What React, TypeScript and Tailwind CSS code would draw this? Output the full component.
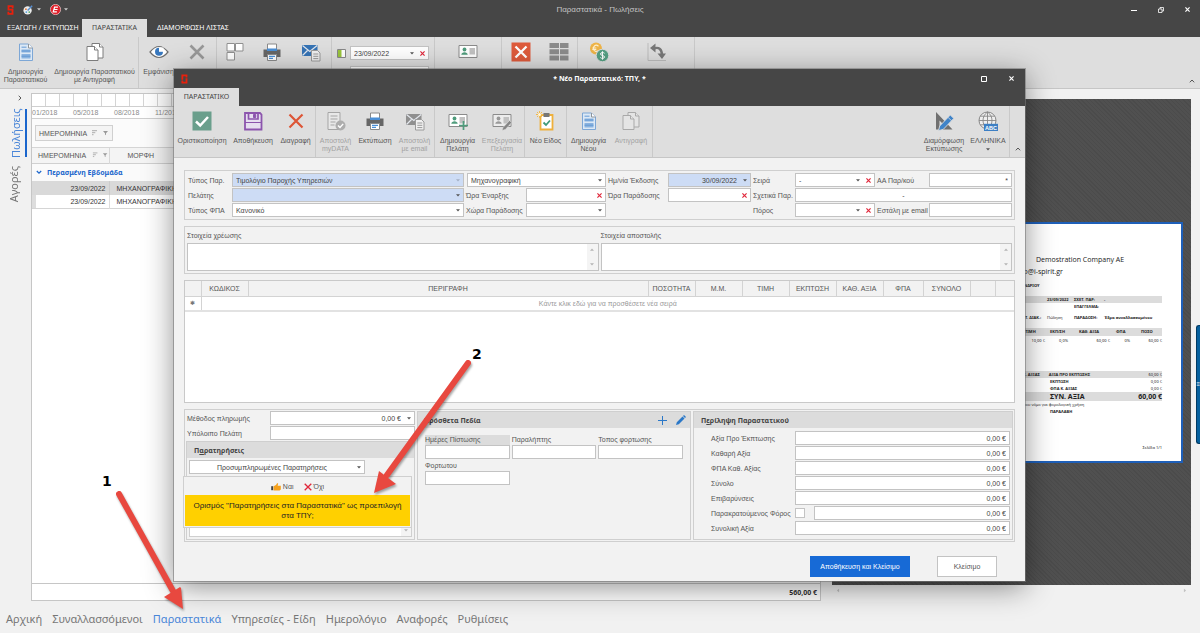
import React from "react";

type Kids = { children?: React.ReactNode };

/* ---------- icons ---------- */

function Logo({ flip = false }: { flip?: boolean }) {
  return (
    <svg viewBox="0 0 8 12" className="h-[10px] w-[7px]" aria-hidden="true">
      <path
        d={flip ? "M1.400 7V1.600H6.400V4.200M6.400 5V10.400H1.400V7.800" : "M6.600 3.800V1.400H1.600V5.600H6.400V10.600H1.400V8.200"}
        fill="none"
        stroke="#e8200c"
        strokeWidth="2.200"
      />
    </svg>
  );
}

function Svg({ children, className = "size-[20px]" }: Kids & { className?: string }) {
  return (
    <svg viewBox="0 0 20 20" className={className} fill="none" aria-hidden="true">
      {children}
    </svg>
  );
}

const DocBlue = () => (
  <Svg>
    <path d="M3.500 2h9l4 4v12.500h-13z" fill="#dce8f5" stroke="#7da7d6" />
    <path d="M12.500 2v4h4" fill="#fff" stroke="#8f9499" />
    <path d="M5.500 4.500h5v1.500h-5zM5.500 7.500h9v3h-9zM5.500 12h9v4.500h-9z" fill="#8ab3e0" />
    <path d="M5.500 9h9M5.500 14.200h9" stroke="#5b93cf" strokeWidth=".8" />
  </Svg>
);

const Copies = ({ faded = false }: { faded?: boolean }) => (
  <Svg>
    <g stroke={faded ? "#a9a9a9" : "#7c7c7c"} fill={faded ? "#e4e4e4" : "#fff"}>
      <path d="M7 1.500h7.500l3.500 3.500v11H7z" />
      <path d="M14.500 1.500V5H18" />
      <path d="M2 4.500h7.500L13 8v10.500H2z" />
      <path d="M9.500 4.500V8H13" />
    </g>
  </Svg>
);

const Eye = () => (
  <Svg>
    <path d="M1 10q9-11 18 0q-9 11-18 0z" fill="#fff" stroke="#6f6f6f" strokeWidth="1.200" />
    <circle cx="10" cy="9.800" r="4" fill="#3878be" />
    <path d="M10 9.800V5.500h4.500v4.300z" fill="#fff" />
  </Svg>
);

const Cross = ({ color, w = 2.2 }: { color: string; w?: number }) => (
  <Svg>
    <path d="M3.500 3.500l13 13M16.500 3.500l-13 13" stroke={color} strokeWidth={w} />
  </Svg>
);

const Squares = () => (
  <Svg>
    <path d="M2 1.500h7.500v7.500H2zM10.500 1.500h7.500v7.500h-7.500zM2 10.500h7.500V18H2z" fill="#fff" stroke="#909090" />
  </Svg>
);

const Printer = () => (
  <Svg>
    <path d="M5.500 2h9v6h-9z" fill="#fff" stroke="#8a8a8a" />
    <path d="M1.500 7.500h17v7.500h-17z" fill="#666" />
    <path d="M5 6.500h10v2.500H5z" fill="#4b8fd5" />
    <path d="M5.500 12.500h9v6h-9z" fill="#fff" stroke="#8a8a8a" />
    <path d="M7 14.300h6M7 16.300h4" stroke="#4b8fd5" strokeWidth="1.200" />
  </Svg>
);

const Mail = ({ faded = false }: { faded?: boolean }) => (
  <Svg>
    <path d="M1 3h15.500v11H1z" fill={faded ? "#8f8f8f" : "#3573b5"} />
    <path d="M1.500 3.500l7.300 6 7.300-6M1.500 13.500l5-5M16 13l-5-5" stroke="#e4e8ee" strokeWidth="1.200" />
    <path d="M10.500 8.500h6L19 11v8h-8.500z" fill="#f0f0f0" stroke="#9a9a9a" />
    <path d="M12.300 12h5M12.300 14.300h5M12.300 16.600h5" stroke="#999" />
  </Svg>
);

const Card = ({ mark, faded = false }: { mark?: "plus" | "pen"; faded?: boolean }) => (
  <Svg>
    <path d="M1 3.500h18v12H1z" fill={faded ? "#ececec" : "#fff"} stroke="#8b8b8b" />
    <circle cx="6.500" cy="7.500" r="1.900" fill={faded ? "#999" : "#4f9c7c"} />
    <path d="M3.300 12.800c0-3.500 6.400-3.500 6.400 0z" fill={faded ? "#999" : "#4f9c7c"} />
    <path d="M11.500 6h5.500v6.500h-5.500z" fill="#c1c1c1" />
    {mark === "plus" && <path d="M15.500 10v9M11 14.500h9" stroke="#4f9c7c" strokeWidth="1.700" />}
    {mark === "pen" && <path d="M10 19.500l1-3 6.500-7 2.300 2-6.500 7z" fill="#858585" stroke="#e4e4e4" strokeWidth=".6" />}
  </Svg>
);

const RedBox = () => (
  <Svg>
    <path d="M.5.5h19v19H.5z" fill="#de5b3c" />
    <path d="M4.500 4.500l11 11M15.500 4.500l-11 11" stroke="#fff" strokeWidth="2.300" />
  </Svg>
);

const Tiles = () => (
  <Svg>
    <path d="M.5 1H10v5H.5zM11 1h8.500v5H11zM.5 7.300H10v5H.5zM11 7.300h8.500v5H11zM.5 13.600H10v5H.5zM11 13.600h8.500v5H11z" fill="#8b8b8b" />
  </Svg>
);

const Coins = () => (
  <Svg>
    <circle cx="7" cy="6.500" r="6" fill="#efb447" />
    <path d="M9.500 4.300c-3-2.500-5.500 0-5 2.700s3.300 3 5 1.300M3.300 6h4M3.300 7.500h4" stroke="#fff1d0" strokeWidth="1.200" />
    <circle cx="13.500" cy="13.500" r="6.300" fill="#56a083" stroke="#dedede" />
    <path d="M15.500 11.300c-1-1.200-4-1-4 .7 0 2 4 1 4 3 0 1.600-3 2-4.200.5M13.500 9.300v8.400" stroke="#fff" />
  </Svg>
);

const Return = () => (
  <Svg>
    <path d="M1 1v17.500h18" stroke="#bcbcbc" />
    <path d="M7 6.500c5-2 8 1 8 7" stroke="#787878" strokeWidth="2.400" />
    <path d="M3 6l5.500-4.500v9zM10.500 11.500h8.500l-4 5.500z" fill="#787878" />
  </Svg>
);

const CheckBox = () => (
  <Svg>
    <path d="M.5.500h19v19H.5z" fill="#6a9f8c" />
    <path d="M4 10.500l4.200 4L16 6" stroke="#fff" strokeWidth="2.500" />
  </Svg>
);

const Floppy = () => (
  <Svg>
    <path d="M2 2h15l1.500 1.500v15H2z" fill="#e6dff0" stroke="#8c55ad" strokeWidth="1.800" />
    <path d="M5.500 2v6h9.500V2" stroke="#8c55ad" strokeWidth="1.700" />
    <path d="M10.500 3.500h2.200v3h-2.200zM2 11.500h16" fill="#8c55ad" stroke="#8c55ad" />
  </Svg>
);

const DocCheck = () => (
  <Svg>
    <path d="M2 1.500h12v17H2z" fill="#e8e8e8" stroke="#a5a5a5" />
    <path d="M4.500 5h7M4.500 8h7M4.500 11h5M4.500 14h4" stroke="#a5a5a5" />
    <circle cx="14.500" cy="14.500" r="5" fill="#adadad" />
    <path d="M12 14.500l2 2 3.200-3.600" stroke="#fff" strokeWidth="1.400" />
  </Svg>
);

const Clipboard = () => (
  <Svg>
    <path d="M4.500 4h12v14.500h-12z" fill="#fff" stroke="#eeb03c" strokeWidth="1.800" />
    <path d="M7.500 2h6v4h-6z" fill="#777" />
    <path d="M7.500 11.500l2.500 2.500 4-4.500" stroke="#3f9a78" strokeWidth="1.800" />
    <path d="M3.500 0v7M0 3.500h7M1 1l5 5M6 1L1 6" stroke="#f2b94e" />
    <circle cx="3.500" cy="3.500" r="1.500" fill="#fff6dd" />
  </Svg>
);

const Design = () => (
  <Svg>
    <path d="M2 1v17.500h16.500zM5.500 9.500v5.500h5.500z" fill="#707070" fillRule="evenodd" />
    <path d="M4.500 19.700l1.200-4.700L16.300 4l3.500 3.400L9.300 18.300z" fill="#3f83c8" stroke="#dedede" strokeWidth=".9" />
    <path d="M14 6.300l3.500 3.500" stroke="#dedede" strokeWidth=".8" />
  </Svg>
);

const Globe = () => (
  <Svg>
    <circle cx="9.500" cy="9.500" r="8.500" fill="#efefef" stroke="#878787" />
    <path d="M9.500 1v17M1 9.500h17M2.500 5.200h14M2.500 13.800h14M9.500 1C3.500 5 3.500 14 9.500 18M9.500 1c6 4 6 13 0 17" stroke="#878787" strokeWidth=".9" />
    <path d="M6 12.800h14V20H6z" fill="#3d7fc4" />
    <text x="13" y="18.600" fontSize="5.500" fontWeight="700" fill="#fff" textAnchor="middle">ABC</text>
  </Svg>
);

const Caret = ({ color = "#555" }: { color?: string }) => (
  <svg viewBox="0 0 5 3" className="h-[3px] w-[4px] shrink-0" aria-hidden="true">
    <path d="M0 0h5L2.500 2.800z" fill={color} />
  </svg>
);

const Chevron = ({ className = "" }: { className?: string }) => (
  <svg viewBox="0 0 6 6" className={`size-[6px] ${className}`} aria-hidden="true">
    <path d="M.8 4.300L3 2l2.200 2.300" fill="none" stroke="#555" />
  </svg>
);

const SmallX = ({ color = "#e0263a" }: { color?: string }) => (
  <svg viewBox="0 0 6 6" className="size-[5px] shrink-0" aria-hidden="true">
    <path d="M.5.5l5 5M5.500.5l-5 5" stroke={color} strokeWidth="1.400" />
  </svg>
);

const SortFilter = () => (
  <svg viewBox="0 0 18 6" className="h-[6px] w-[18px]" aria-hidden="true">
    <path d="M1 .7h5M1 2.700h3.300M1 4.700h1.500" stroke="#999" strokeWidth=".8" />
    <path d="M12 1h5l-2 2.200v2l-1-.6V3.200z" fill="#999" />
  </svg>
);

/* ---------- building blocks ---------- */

function Tool({ icon, lines = [], width, faded = false, caret = false, label }: {
  icon: React.ReactNode; lines?: string[]; width: string; faded?: boolean; caret?: boolean; label?: string;
}) {
  return (
    <button type="button" aria-label={label} className={`flex shrink-0 flex-col items-center pt-[5px] ${width} ${faded ? "text-[#a2a2a2]" : "text-[#555]"}`}>
      {icon}
      <span className="mt-[6px] flex flex-col items-center leading-[8px] whitespace-nowrap">
        {lines.map((l) => <span key={l}>{l}</span>)}
        {caret && <span className="pt-[3px]"><Caret /></span>}
      </span>
    </button>
  );
}

const Sep = () => <div className="w-px shrink-0 self-stretch bg-[#c9c9c9]" />;

function Box({ children, blue = false, className = "" }: Kids & { blue?: boolean; className?: string }) {
  return (
    <div className={`flex h-[14px] min-w-0 items-center gap-[6px] border border-[#c3c3c3] px-[3px] ${blue ? "bg-[#cddcf5]" : "bg-white"} ${className}`}>
      {children}
    </div>
  );
}

function Input({ id, value = "", align = "text-left", label }: { id?: string; value?: string; align?: string; label?: string }) {
  return (
    <input id={id} aria-label={label} defaultValue={value} className={`h-[12px] w-full min-w-0 flex-1 bg-transparent text-[#444] outline-none ${align}`} />
  );
}

function Select({ id, value = "", blue = false, clear = false, pale = false, className = "", align = "", label }: {
  id?: string; value?: string; blue?: boolean; clear?: boolean; pale?: boolean; className?: string; align?: string; label?: string;
}) {
  return (
    <Box blue={blue} className={className}>
      <select id={id} aria-label={label} className={`h-[12px] w-full min-w-0 flex-1 appearance-none bg-transparent text-[#444] outline-none ${align}`}>
        <option>{value}</option>
      </select>
      <Caret color={pale ? "#a5b0c4" : "#555"} />
      {clear && <button type="button" aria-label="Καθαρισμός"><SmallX /></button>}
    </Box>
  );
}

function L({ f, children, className = "pl-[2px]" }: Kids & { f: string; className?: string }) {
  return <label htmlFor={f} className={`self-center whitespace-nowrap ${className}`}>{children}</label>;
}

function ScrollMarks() {
  return (
    <div className="flex w-[11px] flex-col items-center justify-between bg-[#f4f4f4] py-[4px]">
      <span className="rotate-180"><Caret color="#b5b5b5" /></span>
      <Caret color="#b5b5b5" />
    </div>
  );
}

/* ---------- main window ---------- */

function TitleBar() {
  return (
    <header className="bg-[#464646] text-white">
      <div className="grid h-[19px] grid-cols-[1fr_auto_1fr] items-center">
        <div className="flex items-center gap-[9px] pl-[7px]">
          <Logo />
          <button type="button" aria-label="Θέμα" className="flex items-center gap-[4px]">
            <svg viewBox="0 0 12 12" className="size-[10px]" aria-hidden="true">
              <circle cx="5.500" cy="6.500" r="5" fill="#ececec" />
              <circle cx="3.500" cy="5" r="1.100" fill="#e27a3a" /><circle cx="4" cy="8.500" r="1.100" fill="#4b9bd8" /><circle cx="7.500" cy="8.500" r="1.100" fill="#57aa67" />
              <path d="M5.500 6.500L11 1" stroke="#5a8fd0" strokeWidth="1.800" />
            </svg>
            <Caret color="#ccc" />
          </button>
          <button type="button" aria-label="Εφαρμογή" className="flex items-center gap-[3px]">
            <svg viewBox="0 0 12 12" className="size-[11px]" aria-hidden="true">
              <circle cx="6" cy="6" r="5.600" fill="#e0202a" stroke="#fff" strokeWidth=".6" />
              <path d="M8.700 3.500H5L3.500 8.500h4M4.500 6h3.700" fill="none" stroke="#fff" strokeWidth="1.300" />
            </svg>
            <Caret color="#ccc" />
          </button>
        </div>
        <h1 className="text-[8px] text-[#c4c4c4]">Παραστατικά - Πωλήσεις</h1>
        <div className="flex items-center justify-end gap-[21px] pr-[10px]">
          <button type="button" aria-label="Ελαχιστοποίηση"><svg viewBox="0 0 6 6" className="size-[6px]"><path d="M0 3.500h6" stroke="#fff" /></svg></button>
          <button type="button" aria-label="Επαναφορά"><svg viewBox="0 0 6 6" className="size-[6px]"><path d="M.5 2h3.500v3.500H.5zM2 2V.5h3.500V4H4" fill="none" stroke="#fff" strokeWidth=".8" /></svg></button>
          <button type="button" aria-label="Κλείσιμο"><SmallX color="#fff" /></button>
        </div>
      </div>
      <nav className="flex h-[18px] font-['Noto_Sans'] leading-[18px]">
        <a href="#export" className="w-[82px] pl-[7px] whitespace-nowrap">ΕΞΑΓΩΓΗ / ΕΚΤΥΠΩΣΗ</a>
        <a href="#docs" className="w-[65px] bg-[#dedede] text-center text-[#444]">ΠΑΡΑΣΤΑΤΙΚΑ</a>
        <a href="#list" className="pl-[10px]">ΔΙΑΜΟΡΦΩΣΗ ΛΙΣΤΑΣ</a>
      </nav>
    </header>
  );
}

function MainRibbon() {
  return (
    <div className="flex h-[52px] border-b border-[#c6c6c6] bg-[#dedede]">
      <Tool icon={<DocBlue />} lines={["Δημιουργία", "Παραστατικού"]} width="w-[51px]" />
      <Tool icon={<Copies />} lines={["Δημιουργία Παραστατικού", "με Αντιγραφή"]} width="w-[87px]" />
      <Sep />
      <Tool icon={<Eye />} lines={["Εμφάνιση"]} width="w-[39px]" />
      <Tool icon={<Cross color="#989898" w={2.6} />} width="w-[38px]" label="Διαγραφή" />
      <Sep />
      <Tool icon={<Squares />} width="w-[36px]" label="Ομάδες" />
      <Tool icon={<Printer />} width="w-[37px]" label="Εκτύπωση" />
      <Tool icon={<Mail />} width="w-[41px]" label="Αποστολή" />
      <Sep />
      <div className="flex w-[102px] items-start gap-[4px] px-[5px] pt-[9px]">
        <svg viewBox="0 0 9 9" className="mt-[3px] size-[9px] shrink-0" aria-hidden="true"><path d="M.5.500h8v8h-8z" fill="#fff" stroke="#888" /><path d="M1 1h3.500v7H1z" fill="#9ac53c" /></svg>
        <div className="flex min-w-0 flex-1 flex-col gap-[6px]">
          <Select value="23/09/2022" clear label="Από" />
          <Select value="23/09/2022" clear label="Έως" />
        </div>
      </div>
      <Sep />
      <Tool icon={<Card />} width="w-[66px]" label="Πελάτης" />
      <Sep />
      <Tool icon={<RedBox />} width="w-[38px]" label="Ακύρωση" />
      <Tool icon={<Tiles />} width="w-[37px]" label="Προβολή" />
      <Sep />
      <Tool icon={<Coins />} width="w-[42px]" label="Νομίσματα" />
      <Tool icon={<Return />} width="w-[74px]" label="Επιστροφή" />
      <Sep />
      <div className="flex flex-1 items-end justify-end pr-[5px] pb-[4px]"><Chevron /></div>
    </div>
  );
}

function ListPanel() {
  return (
    <section className="flex w-[790px] flex-col border border-[#c6c6c6] bg-white">
      <div className="h-[13px] border-b border-[#cfcfcf] bg-[repeating-linear-gradient(90deg,#fff_0px,#fff_13px,#d4d4d4_13px,#d4d4d4_14px)]" />
      <div className="flex h-[12px] items-center border-b border-[#cfcfcf] text-[#8b8b8b]">
        {["01/2018", "05/2018", "08/2018", "11/2018"].map((d) => <span key={d} className="w-[41px]">{d}</span>)}
      </div>
      <div className="flex h-[29px] items-center border-b border-[#d5d5d5] bg-[#fbfbfb] pl-[3px]">
        <span className="flex h-[16px] items-center gap-[4px] border border-[#d0d0d0] bg-[#f4f4f4] px-[3px]">ΗΜΕΡΟΜΗΝΙΑ <SortFilter /></span>
      </div>
      <table className="w-full table-fixed border-collapse">
        <thead>
          <tr className="h-[15px] border-b border-[#d0d0d0] bg-[#f4f4f4] text-left">
            <th className="w-[77px] border-r border-[#d8d8d8] pl-[6px] font-normal whitespace-nowrap"><span className="flex items-center gap-[6px]">ΗΜΕΡΟΜΗΝΙΑ <SortFilter /></span></th>
            <th className="w-[70px] pl-[18px] font-normal">ΜΟΡΦΗ</th>
            <th />
          </tr>
        </thead>
        <tbody>
          <tr className="h-[18px] bg-[#fafafa]">
            <td colSpan={3} className="font-['Noto_Sans'] font-bold text-[#1b66cc]"><span className="flex items-center gap-[5px] pl-[4px]"><svg viewBox="0 0 6 6" className="size-[6px]"><path d="M.8 2L3 4.200 5.200 2" fill="none" stroke="#1b66cc" strokeWidth="1.200" /></svg>Περασμένη Εβδομάδα</span></td>
          </tr>
          <tr className="h-[14px] bg-[#d9d9d9] text-[#333]">
            <td className="border-r border-[#ccc] pr-[3px] text-right">23/09/2022</td><td className="pl-[7px] whitespace-nowrap">ΜΗΧΑΝΟΓΡΑΦΙΚΗ</td><td />
          </tr>
          <tr className="h-[13px] border-b border-[#d5d5d5] text-[#333]">
            <td className="border-r border-[#ddd] pr-[3px] text-right shadow-[inset_4px_0_0_#ddd]">23/09/2022</td><td className="pl-[7px] whitespace-nowrap">ΜΗΧΑΝΟΓΡΑΦΙΚΗ</td><td />
          </tr>
        </tbody>
      </table>
      <div className="flex-1" />
      <div className="flex h-[17px] items-center justify-end border-t border-[#c6c6c6] pr-[3px] font-['Noto_Sans'] text-[7px] font-bold text-[#333]">560,00 €</div>
    </section>
  );
}

function Invoice() {
  return (
    <div className="ml-auto flex h-[241px] w-[340px] flex-col border-2 border-[#1e5fb8] bg-white pt-[30px] pr-[19px] pl-[158px] font-['Noto_Sans'] text-[4px] leading-[7px] font-bold text-[#222]">
      <p className="pl-[33px] font-['Open_Sans'] text-[7px] leading-[12px] font-normal">Demostration Company AE</p>
      <p className="pl-[12px] font-['Open_Sans'] text-[7px] leading-[12px] font-normal">info@i-spirit.gr</p>
      <p className="pt-[3px] pl-[8px] leading-[10px]">ΑΛΕΞΑΝΔΡΙΟΥ</p>
      <div className="mt-[5px] grid grid-cols-[44px_27px_30px_1fr] bg-[#dcdcdc]"><span /><span>23/09/2022</span><span>ΣΧΕΤ. ΠΑΡ:</span><span>-</span></div>
      <p className="pl-[71px]">ΕΠΑΓΓΕΛΜΑ:</p>
      <div className="mt-[4px] grid grid-cols-[22px_22px_27px_30px_1fr]"><span /><span>Τ. ΔΙΑΚ.:</span><span className="font-normal">Πώληση</span><span>ΠΑΡΑΔΟΣΗ:</span><span className="whitespace-nowrap">Έδρα συναλλασσομένου</span></div>
      <div className="mt-[7px] grid grid-cols-[22px_25px_29px_37px_25px_1fr] bg-[#dcdcdc] leading-[8px]"><span /><span>ΤΙΜΗ</span><span>ΕΚΠ/ΣΗ</span><span>ΚΑΘ. ΑΞΙΑ</span><span>ΦΠΑ</span><span>ΠΟΣΟ</span></div>
      <div className="mt-px grid grid-cols-[42px_23px_42px_20px_1fr] text-right font-normal"><span>10,00 €</span><span>0,0%</span><span>60,00 €</span><span>0%</span><span>60,00 €</span></div>
      <div className="mt-[27px] flex justify-between bg-[#dcdcdc] pl-[20px]"><span>Κ. ΑΞΙΑΣ</span><span className="mr-auto pl-[9px]">ΑΞΙΑ ΠΡΟ ΕΚΠΤΩΣΗΣ</span><span className="font-normal">60,00 €</span></div>
      <div className="flex justify-between pl-[47px]"><span>ΕΚΠΤΩΣΗ</span><span className="font-normal">0,00 €</span></div>
      <div className="flex justify-between pl-[47px]"><span>ΦΠΑ Κ. ΑΞΙΑΣ</span><span className="font-normal">0,00 €</span></div>
      <div className="flex justify-between bg-[#dcdcdc] pl-[47px] text-[7px] leading-[9px]"><span>ΣΥΝ. ΑΞΙΑ</span><span>60,00 €</span></div>
      <p className="pl-[20px] font-normal">που νόμο για φορολογική χρήση</p>
      <p className="pl-[47px]">ΠΑΡΑΛΑΒΗ</p>
      <p className="mt-auto pb-[10px] text-right font-normal">Σελίδα 1/1</p>
    </div>
  );
}

/* ---------- dialog ---------- */

function DialogRibbon() {
  return (
    <div className="flex h-[52px] border-b border-[#c6c6c6] bg-[#dedede]">
      <Tool icon={<CheckBox />} lines={["Οριστικοποίηση"]} width="w-[56px]" />
      <Tool icon={<Floppy />} lines={["Αποθήκευση"]} width="w-[46px]" />
      <Tool icon={<Cross color="#dd5536" />} lines={["Διαγραφή"]} width="w-[39px]" />
      <Sep />
      <Tool icon={<DocCheck />} lines={["Αποστολή", "myDATA"]} width="w-[39px]" faded />
      <Tool icon={<Printer />} lines={["Εκτύπωση"]} width="w-[40px]" />
      <Tool icon={<Mail faded />} lines={["Αποστολή", "με email"]} width="w-[39px]" faded />
      <Sep />
      <Tool icon={<Card mark="plus" />} lines={["Δημιουργία", "Πελάτη"]} width="w-[45px]" />
      <Tool icon={<Card mark="pen" faded />} lines={["Επεξεργασία", "Πελάτη"]} width="w-[44px]" faded />
      <Sep />
      <Tool icon={<Clipboard />} lines={["Νέο Είδος"]} width="w-[41px]" />
      <Sep />
      <Tool icon={<DocBlue />} lines={["Δημιουργία", "Νέου"]} width="w-[43px]" />
      <Tool icon={<Copies faded />} lines={["Αντιγραφή"]} width="w-[42px]" faded />
      <Sep />
      <div className="flex-1" />
      <Tool icon={<Design />} lines={["Διαμόρφωση", "Εκτύπωσης"]} width="w-[46px]" />
      <Tool icon={<Globe />} lines={["ΕΛΛΗΝΙΚΑ"]} caret width="w-[42px]" />
      <Sep />
      <div className="flex w-[15px] items-end justify-center pb-[5px]"><Chevron /></div>
    </div>
  );
}

function DocumentFields() {
  return (
    <fieldset className="grid grid-cols-[45px_minmax(0,1fr)_62px_80px_62px_83px_44px_80px_54px_83px] gap-y-px border border-[#cfcfcf] px-[2px] py-[2px]">
      <L f="type" className="pl-px">Τύπος Παρ.</L>
      <Select id="type" value="Τιμολόγιο Παροχής Υπηρεσιών" blue pale />
      <Select value="Μηχανογραφική" label="Μορφή" className="col-span-2 ml-[3px]" />
      <L f="issued">Ημ/νία Έκδοσης</L>
      <Select id="issued" value="30/09/2022" blue align="[text-align-last:right]" />
      <L f="series">Σειρά</L>
      <Select id="series" value="-" clear />
      <L f="number">ΑΑ Παρ/κού</L>
      <Box><Input id="number" value="*" align="text-right" /></Box>

      <L f="client" className="pl-px">Πελάτης</L>
      <Select id="client" blue />
      <L f="start">Ώρα Έναρξης</L>
      <Box><Input id="start" /><button type="button" aria-label="Καθαρισμός"><SmallX /></button></Box>
      <L f="delivery">Ώρα Παράδοσης</L>
      <Box><Input id="delivery" /><button type="button" aria-label="Καθαρισμός"><SmallX /></button></Box>
      <L f="related">Σχετικά Παρ.</L>
      <Box className="col-span-3"><Input id="related" value="-" align="text-center" /></Box>

      <L f="vat" className="pl-px">Τύπος ΦΠΑ</L>
      <Select id="vat" value="Κανονικό" />
      <L f="place">Χώρα Παράδοσης</L>
      <Select id="place" />
      <span /><span />
      <L f="resource">Πόρος</L>
      <Select id="resource" clear />
      <L f="mail">Εστάλη με email</L>
      <Box><Input id="mail" /></Box>
    </fieldset>
  );
}

const columns: [string, string][] = [
  ["", "w-[16px]"], ["ΚΩΔΙΚΟΣ", "w-[47px]"], ["ΠΕΡΙΓΡΑΦΗ", ""], ["ΠΟΣΟΤΗΤΑ", "w-[47px]"], ["Μ.Μ.", "w-[47px]"],
  ["ΤΙΜΗ", "w-[47px]"], ["ΕΚΠΤΩΣΗ", "w-[47px]"], ["ΚΑΘ. ΑΞΙΑ", "w-[47px]"], ["ΦΠΑ", "w-[40px]"], ["ΣΥΝΟΛΟ", "w-[47px]"],
  ["", "w-[25px]"], ["", "w-[19px]"],
];

function Lines() {
  return (
    <div className="mt-[6px] h-[123px] border border-[#c9c9c9] bg-white">
      <table className="w-full table-fixed border-collapse">
        <thead>
          <tr className="h-[15px] border-b border-[#d3d3d3] bg-[#f2f2f2]">
            {columns.map(([name, width], i) => (
              <th key={i} className={`border-r border-[#d3d3d3] p-0 font-normal last:border-r-0 ${width}`}>{name}</th>
            ))}
          </tr>
        </thead>
        <tbody>
          <tr className="h-[15px] border-b-2 border-[#e2e2e2] text-[#999]">
            <td className="border-r border-[#d3d3d3] p-0 text-center text-[6px] text-[#777]">✱</td>
            <td colSpan={11} className="p-0 text-center">Κάντε κλικ εδώ για να προσθέσετε νέα σειρά</td>
          </tr>
        </tbody>
      </table>
    </div>
  );
}

const PanelTitle = ({ children }: Kids) => (
  <h3 className="flex h-[16px] items-center bg-[#dcdcdc] px-[7px] font-['Noto_Sans'] font-bold text-[#444]">{children}</h3>
);

function PaymentPanel() {
  return (
    <div className="relative flex w-[229px] flex-col">
      <div className="grid grid-cols-[84px_1fr] gap-y-px">
        <L f="method" className="pl-px">Μέθοδος πληρωμής</L>
        <Select id="method" value="0,00 €" align="[text-align-last:right]" />
        <L f="balance" className="pl-px">Υπόλοιπο Πελάτη</L>
        <Box><Input id="balance" /></Box>
      </div>
      <div className="mt-px flex flex-1 flex-col border border-[#cfcfcf]">
        <PanelTitle><span>Π<u>α</u>ρατηρήσεις</span></PanelTitle>
        <Select value="Προσυμπληρωμένες Παρατηρήσεις" label="Προσυμπληρωμένες" align="[text-align-last:center]" className="mt-[2px] ml-[2px] w-[176px]" />
        <div className="mx-[2px] mt-[2px] mb-[2px] flex flex-1 border border-[#cfcfcf] bg-white">
          <textarea aria-label="Παρατηρήσεις" className="w-full resize-none outline-none" />
          <ScrollMarks />
        </div>
      </div>
      <div role="alertdialog" aria-label="Προεπιλογή" className="absolute top-[65px] -left-[3px] w-[229px] border border-[#cfcfcf] bg-[#f2f2f2] p-px">
        <div className="flex h-[17px] items-center justify-center gap-[10px]">
          <button type="button" className="flex items-center gap-[2px]">
            <svg viewBox="0 0 12 10" className="h-[8px] w-[10px]" aria-hidden="true"><path d="M0 4h2.500v5H0z" fill="#444" /><path d="M3 4l3-1.500L7.500 0l1.300.8-.8 2.700h4V8l-1.500 1.500H3z" fill="#f5a11c" /></svg>
            Ναι
          </button>
          <button type="button" className="flex items-center gap-[2px]">
            <svg viewBox="0 0 8 8" className="size-[8px]" aria-hidden="true"><path d="M.7.7l6.600 6.600M7.300.7L.7 7.300" stroke="#e0263a" strokeWidth="1.300" /></svg>
            Όχι
          </button>
        </div>
        <p className="flex h-[31px] items-center justify-center bg-[#ffd000] px-[6px] text-center text-[8px] leading-[10px] text-[#222]">
          <span>Ορισμός "Παρατηρήσεις στα Παραστατικά" ως προεπιλογή στα ΤΠΥ;</span>
        </p>
      </div>
    </div>
  );
}

function ExtraPanel() {
  const fields: [string, string][] = [["days", "Ημέρες Πίστωσης"], ["receiver", "Παραλήπτης"], ["loading", "Τοπος φορτωσης"], ["carrier", "Φορτωτου"]];
  return (
    <div className="w-[274px] border border-[#cfcfcf]">
      <div className="flex h-[16px] items-center gap-[9px] bg-[#dcdcdc] pr-[4px] pl-[6px] font-['Noto_Sans'] font-bold text-[#444]">
        <h3 className="mr-auto">Πρόσθετα Πεδία</h3>
        <button type="button" aria-label="Προσθήκη"><svg viewBox="0 0 9 9" className="size-[9px]"><path d="M4 0h1v4h4v1H5v4H4V5H0V4h4z" fill="#2b78c8" /></svg></button>
        <button type="button" aria-label="Επεξεργασία"><svg viewBox="0 0 10 10" className="size-[10px]"><path d="M0 10l.8-2.800L6.500 1.500l2 2L2.800 9.200zM7 1l1-1 2 2-1 1z" fill="#2b78c8" /></svg></button>
      </div>
      <div className="grid grid-cols-3 gap-x-[2px] gap-y-[2px] px-[7px] pt-[7px]">
        {fields.map(([id, name], i) => (
          <div key={id}>
            <label htmlFor={id} className={`block h-[10px] leading-[10px] ${i === 0 ? "bg-[#dcdcdc]" : ""}`}>{name}</label>
            <Box><Input id={id} /></Box>
          </div>
        ))}
      </div>
    </div>
  );
}

function SummaryPanel() {
  const rows = ["Αξία Προ Έκπτωσης", "Καθαρή Αξία", "ΦΠΑ Καθ. Αξίας", "Σύνολο", "Επιβαρύνσεις", "Παρακρατούμενος Φόρος", "Συνολική Αξία"];
  return (
    <div className="flex-1 border border-[#cfcfcf]">
      <PanelTitle><span>Π<u>ε</u>ρίληψη Παραστατικού</span></PanelTitle>
      <div className="flex flex-col gap-px pt-[3px] pr-[2px] pl-[17px]">
        {rows.map((name, i) => (
          <div key={name} className="flex items-center">
            <label htmlFor={`sum${i}`} className="w-[84px] shrink-0 whitespace-nowrap">{name}</label>
            {i === 5 && <input type="checkbox" aria-label="Παρακράτηση" className="mr-[9px] size-[10px] shrink-0 appearance-none border border-[#c3c3c3] bg-white" />}
            <Box className="flex-1"><Input id={`sum${i}`} value="0,00 €" align="text-right" /></Box>
          </div>
        ))}
      </div>
    </div>
  );
}

function Dialog() {
  return (
    <div role="dialog" aria-label="Νέο Παραστατικό" className="absolute top-[69px] right-[175px] left-[174px] bg-[#f2f2f2] shadow-[0_0_0_1px_rgba(120,120,120,0.6),0_6px_28px_rgba(0,0,0,0.45)]">
      <header className="bg-[#464646] text-white">
        <div className="grid h-[19px] grid-cols-[1fr_auto_1fr] items-center">
          <div className="pl-[7px]"><Logo flip /></div>
          <h2 className="font-['Noto_Sans'] font-bold">* Νέο Παραστατικό: ΤΠΥ, *</h2>
          <div className="flex items-center justify-end gap-[22px] pr-[11px]">
            <button type="button" aria-label="Μεγιστοποίηση"><svg viewBox="0 0 6 6" className="size-[6px]"><path d="M.5.500h5v5h-5z" fill="none" stroke="#fff" /></svg></button>
            <button type="button" aria-label="Κλείσιμο"><SmallX color="#fff" /></button>
          </div>
        </div>
        <nav className="flex h-[18px] font-['Noto_Sans'] leading-[18px]">
          <a href="#doc" className="w-[65px] bg-[#dedede] text-center text-[#444]">ΠΑΡΑΣΤΑΤΙΚΟ</a>
        </nav>
      </header>
      <DialogRibbon />
      <form className="px-[10px] pt-[12px] pb-[4px]" onSubmit={(e) => e.preventDefault()}>
        <DocumentFields />
        <div className="mt-[6px] grid grid-cols-2 gap-x-[2px] border border-[#cfcfcf] p-[2px]">
          {[["bill", "Στοιχεία χρέωσης"], ["ship", "Στοιχεία αποστολής"]].map(([id, name]) => (
            <div key={id}>
              <label htmlFor={id} className="block h-[14px] leading-[14px]">{name}</label>
              <div className="flex h-[28px] border border-[#c3c3c3] bg-white">
                <textarea id={id} className="w-full resize-none outline-none" />
                <ScrollMarks />
              </div>
            </div>
          ))}
        </div>
        <Lines />
        <div className="mt-[6px] flex h-[133px] gap-[2px] border border-[#cfcfcf] p-px">
          <PaymentPanel />
          <ExtraPanel />
          <SummaryPanel />
        </div>
        <div className="mt-[14px] flex justify-end gap-[27px] pr-[18px]">
          <button type="submit" className="h-[21px] w-[100px] bg-[#176ad6] text-white">Αποθήκευση και Κλείσιμο</button>
          <button type="button" className="h-[21px] w-[60px] border border-[#c3c3c3] bg-white">Κλείσιμο</button>
        </div>
      </form>
    </div>
  );
}

/* ---------- page ---------- */

function Arrow({ className, points, start, end, box }: { className: string; points: string; start: number[]; end: number[]; box: string }) {
  return (
    <svg viewBox={box} className={`pointer-events-none absolute drop-shadow-[1px_2px_1px_rgba(0,0,0,0.35)] ${className}`} aria-hidden="true">
      <path d={`M${start[0]} ${start[1]}L${end[0]} ${end[1]}`} stroke="#e8483f" strokeWidth="6" strokeLinecap="round" />
      <path d={points} fill="#e8483f" />
    </svg>
  );
}

export default function App() {
  const sections = ["Αρχική", "Συναλλασσόμενοι", "Παραστατικά", "Υπηρεσίες - Είδη", "Ημερολόγιο", "Αναφορές", "Ρυθμίσεις"];
  return (
    <div className="relative flex min-h-screen w-full flex-col overflow-hidden bg-[#f1f1f1] font-['Liberation_Sans','Noto_Sans',sans-serif] text-[7px] leading-[9px] text-[#555]">
      <TitleBar />
      <MainRibbon />
      <main className="flex flex-1 pt-[4px]">
        <aside className="flex w-[31px] shrink-0 flex-col items-end font-['Noto_Sans'] text-[11px] leading-[18px]">
          <span className="mt-[2px] mr-[8px] mb-[8px] flex rotate-90"><Chevron /></span>
          <a href="#sales" className="mr-[4px] flex h-[48px] rotate-180 items-center justify-center border-l-2 border-[#1b66cc] pr-px text-[#4a86d8] [writing-mode:vertical-rl]">Πωλήσεις</a>
          <a href="#purchases" className="mt-[9px] mr-[8px] rotate-180 text-[#777] [writing-mode:vertical-rl]">Αγορές</a>
        </aside>
        <ListPanel />
        <div className="flex min-w-0 flex-1 flex-col pt-[6px] pr-[9px] pl-[11px]">
          <div className="flex flex-1 flex-col bg-[repeating-linear-gradient(45deg,#4b4b4b_0px,#4b4b4b_1px,#505050_1px,#505050_3px)] pt-[123px] pr-[8px]">
            <Invoice />
          </div>
          <div className="flex h-[16px] justify-between px-[4px] pt-[4px]">
            <span className="flex h-[3px] rotate-90"><Caret color="#c2c2c2" /></span>
            <span className="flex h-[3px] -rotate-90"><Caret color="#c2c2c2" /></span>
          </div>
        </div>
      </main>
      <nav className="flex h-[32px] shrink-0 items-center gap-[10px] pt-[3px] pl-[6px] font-['Noto_Sans'] text-[11px] leading-[16px] text-[#777]">
        {sections.map((s) => (
          <a key={s} href="#section" className={s === "Παραστατικά" ? "text-[#4a86d8]" : ""}>{s}</a>
        ))}
      </nav>

      <Dialog />

      <button type="button" aria-label="Πλαϊνό πάνελ" className="absolute top-[325px] right-0 flex h-[119px] w-[4px] items-center justify-end rounded-l-[3px] border border-r-0 border-[#023a63] bg-[#07619f] text-[6px] text-white">≡</button>

      <span className="absolute top-[472px] left-[102px] font-['DejaVu_Sans'] text-[14px] leading-[18px] font-bold text-black">1</span>
      <span className="absolute top-[345px] left-[472px] font-['DejaVu_Sans'] text-[14px] leading-[18px] font-bold text-black">2</span>
      <Arrow className="top-[485px] left-[110px] h-[130px] w-[85px]" box="110 485 85 130" start={[119, 494]} end={[173, 591]} points="M183 609L164 597L180 587L181 588Z" />
      <Arrow className="top-[355px] left-[365px] h-[145px] w-[115px]" box="365 355 115 145" start={[468, 363]} end={[387, 475]} points="M374 493L379 471L396 484Z" />
    </div>
  );
}
